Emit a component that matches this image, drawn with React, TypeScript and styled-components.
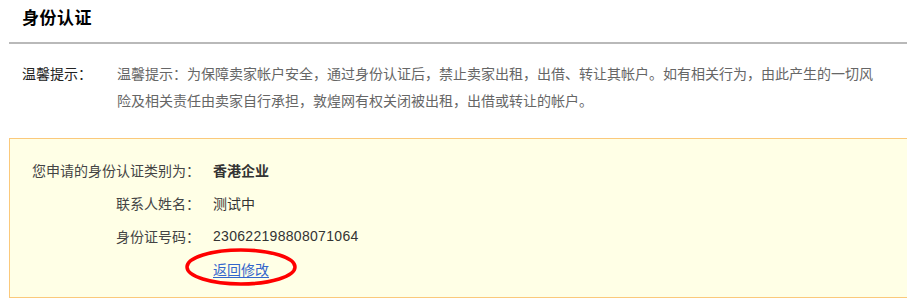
import React from "react";
import styled, { createGlobalStyle } from "styled-components";

const Global = createGlobalStyle`
  html, body {
    margin: 0;
    padding: 0;
    background: #ffffff;
    overflow: hidden;
  }
  body {
    font-family: "Noto Sans CJK SC", "Liberation Sans", sans-serif;
    font-size: 14px;
    color: #333;
  }
`;

const Page = styled.div`
  width: 930px;
  padding-left: 9px;
`;

const Header = styled.div`
  height: 42px;
  border-bottom: 2px solid #b9b9b9;
  display: flex;
  align-items: flex-start;
  padding-left: 13px;
`;

const Title = styled.h2`
  margin: 6px 0 0;
  font-size: 17px;
  font-weight: bold;
  line-height: 22px;
  color: #000;
  letter-spacing: 0.5px;
`;

const Notice = styled.div`
  display: flex;
  padding: 16px 0 0 13px;
  line-height: 27px;
`;

const NoticeLabel = styled.div`
  width: 95px;
  flex: none;
  color: #222;
`;

const NoticeText = styled.p`
  margin: 0;
  width: 762px;
  color: #666;
`;

const Box = styled.div`
  margin-top: 24px;
  background: #ffffe6;
  border: 1px solid #fbc97b;
  padding-top: 14px;
  box-sizing: border-box;
  height: 160px;
  display: grid;
  grid-template-columns: 190px 1fr;
  grid-auto-rows: 33px;
  column-gap: 13px;
  align-items: center;
`;

const Label = styled.div`
  text-align: right;
  color: #444;
`;

const Value = styled.div<{ $bold?: boolean; $num?: boolean }>`
  color: #333;
  font-weight: ${(p) => (p.$bold ? "bold" : "normal")};
  font-family: ${(p) =>
    p.$num
      ? '"Liberation Sans", Arial, sans-serif'
      : '"Noto Sans CJK SC", sans-serif'};
  letter-spacing: ${(p) => (p.$num ? "0.3px" : "0")};
`;

const LinkCell = styled.div`
  grid-column: 2;
`;

const LinkWrap = styled.span`
  position: relative;
  display: inline-block;
`;

const EditLink = styled.a`
  color: #3366cc;
  text-decoration: underline;
  text-underline-offset: 2px;
  cursor: pointer;
`;

const Ring = styled.svg`
  position: absolute;
  left: -28px;
  top: -11px;
  width: 112px;
  height: 38px;
  pointer-events: none;
`;

export default function App() {
  return (
    <>
      <Global />
      <Page>
        <Header>
          <Title>身份认证</Title>
        </Header>
        <Notice>
          <NoticeLabel>温馨提示：</NoticeLabel>
          <NoticeText>
            温馨提示：为保障卖家帐户安全，通过身份认证后，禁止卖家出租，出借、转让其帐户。如有相关行为，由此产生的一切风险及相关责任由卖家自行承担，敦煌网有权关闭被出租，出借或转让的帐户。
          </NoticeText>
        </Notice>
        <Box>
          <Label>您申请的身份认证类别为：</Label>
          <Value $bold>香港企业</Value>
          <Label>联系人姓名：</Label>
          <Value>测试中</Value>
          <Label>身份证号码：</Label>
          <Value $num>230622198808071064</Value>
          <LinkCell>
            <LinkWrap>
              <EditLink>返回修改</EditLink>
              <Ring viewBox="0 0 112 38">
                <ellipse
                  cx="56"
                  cy="19"
                  rx="54"
                  ry="17"
                  fill="none"
                  stroke="#ff0000"
                  strokeWidth="3.5"
                />
              </Ring>
            </LinkWrap>
          </LinkCell>
        </Box>
      </Page>
    </>
  );
}
